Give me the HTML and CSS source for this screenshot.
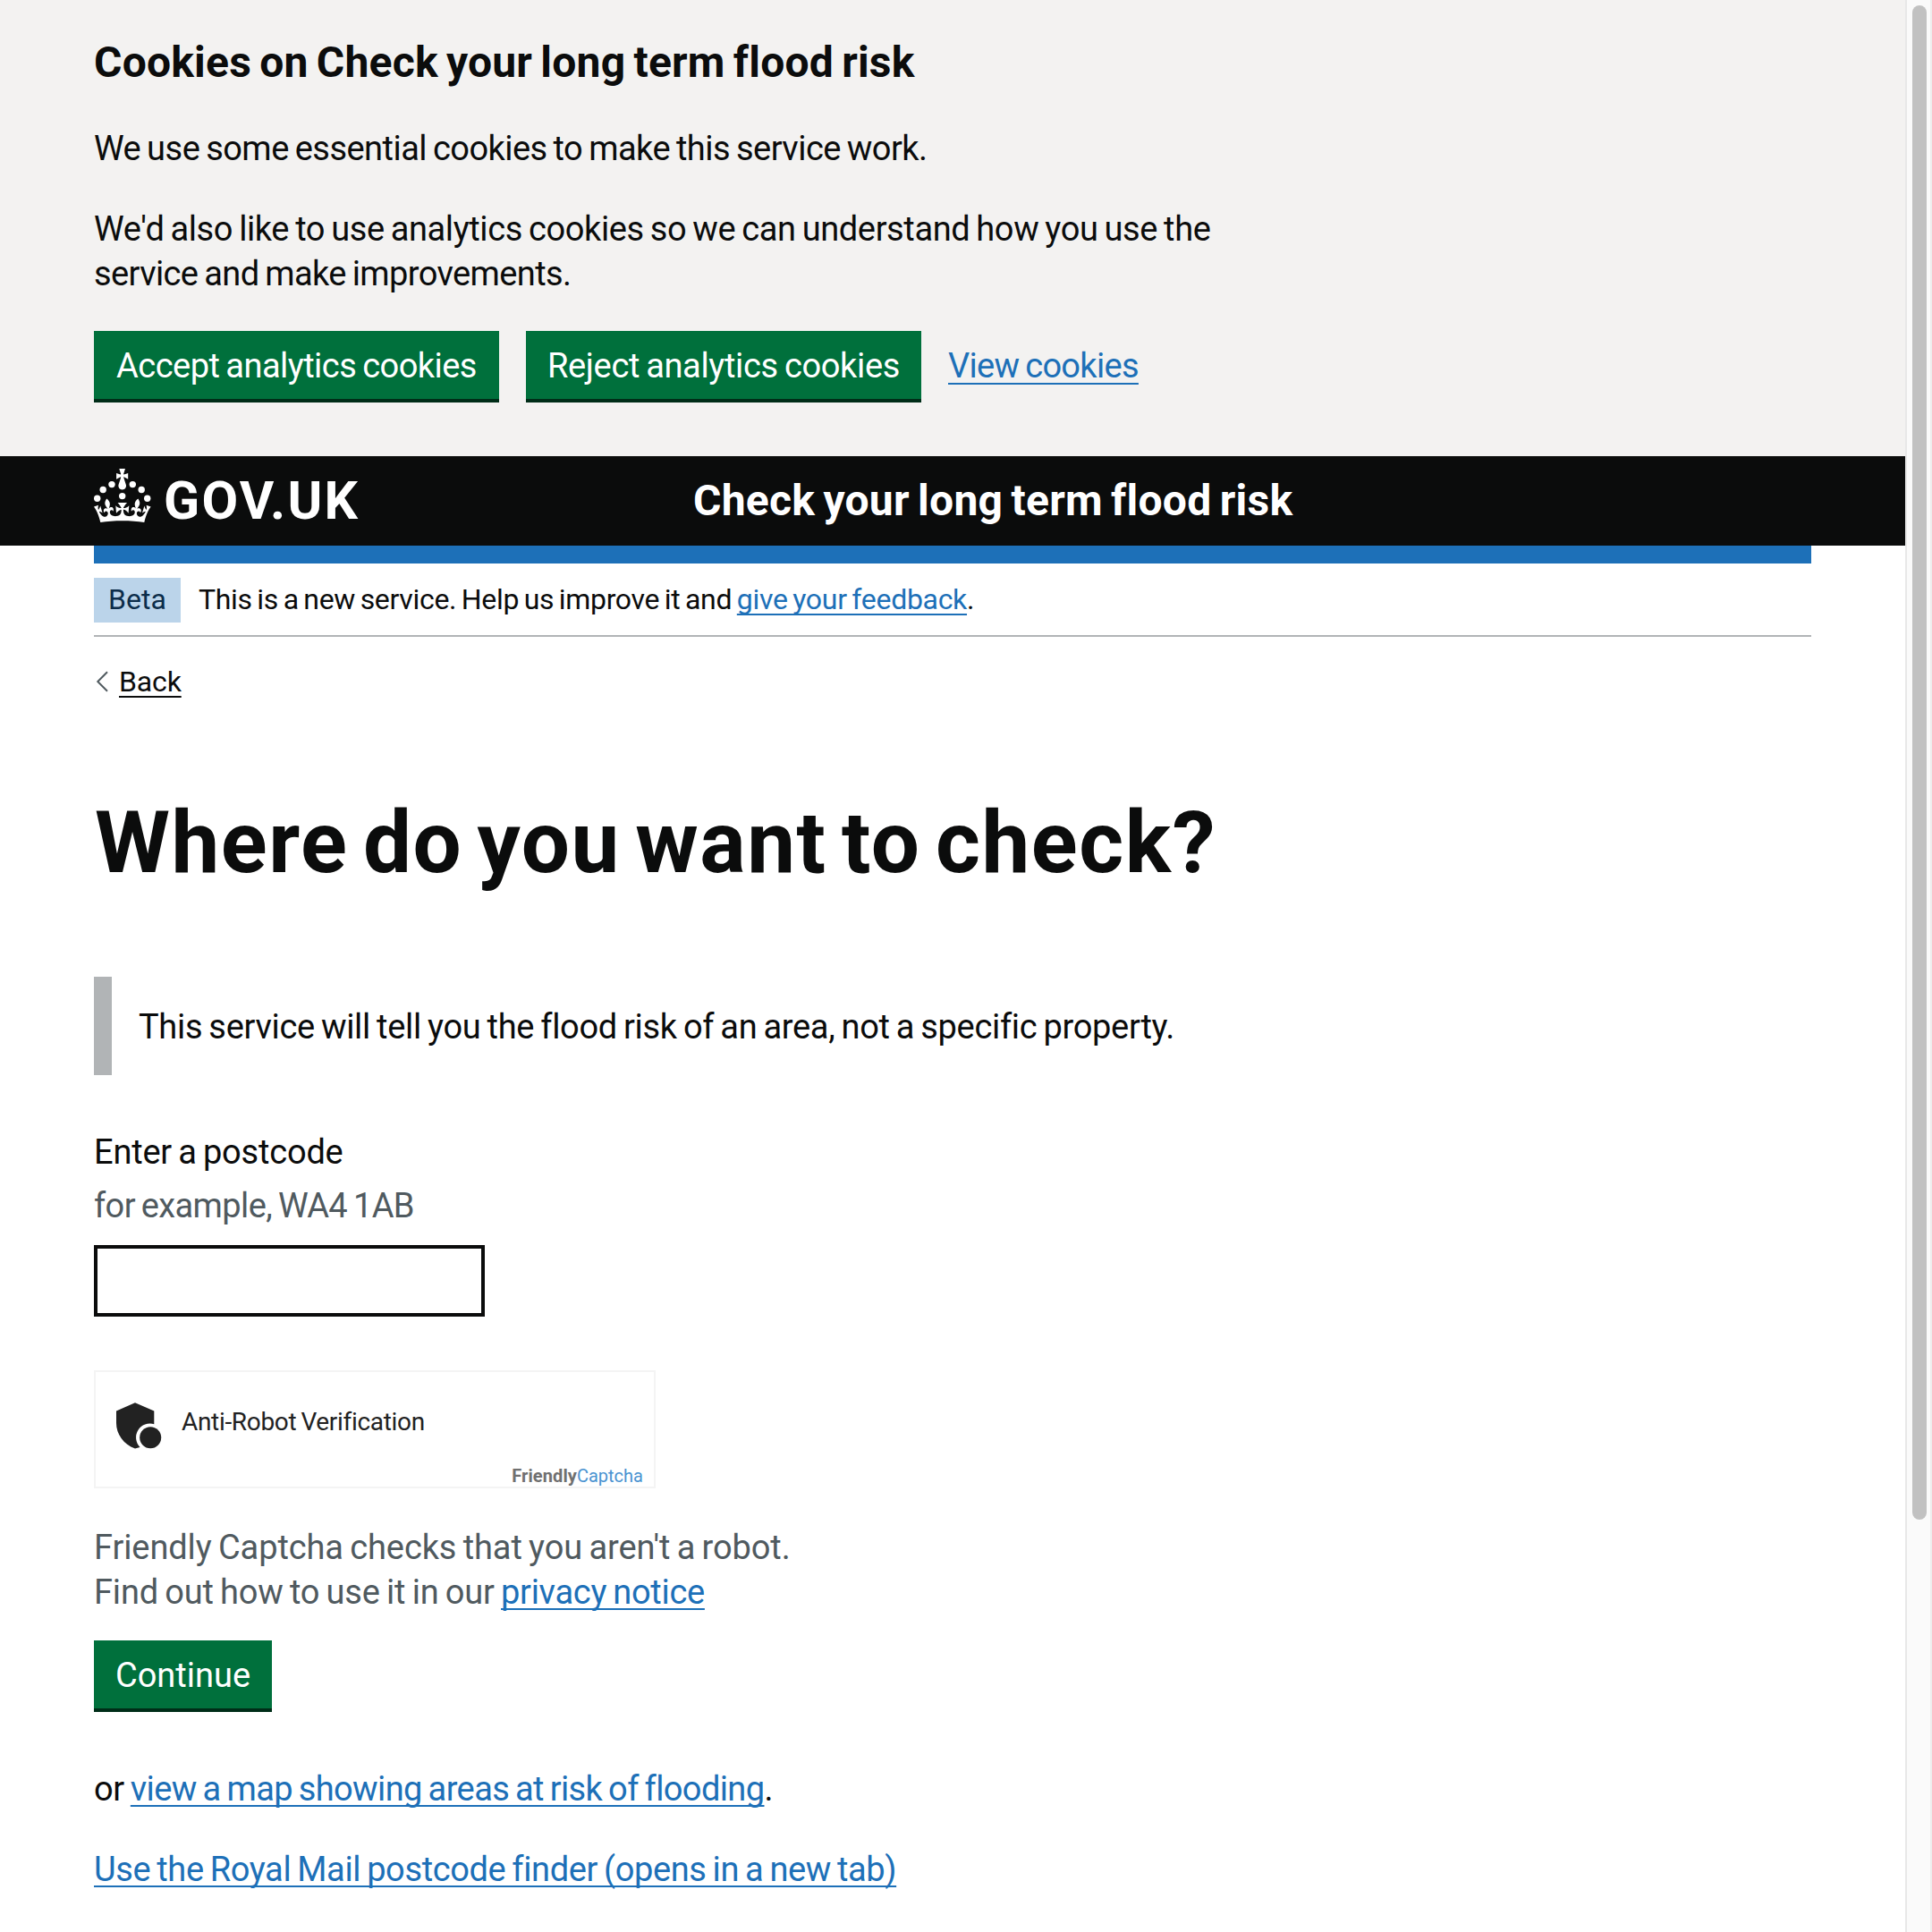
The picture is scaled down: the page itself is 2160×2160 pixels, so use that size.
FILE: index.html
```html
<!DOCTYPE html>
<html lang="en">
<head>
<meta charset="utf-8">
<title>Where do you want to check? - Check your long term flood risk - GOV.UK</title>
<link rel="stylesheet" href="styles.css">
</head>
<body>
<div class="page">
  <section class="cookie-banner">
    <h2 class="cookie-title">Cookies on Check your long term flood risk</h2>
    <p class="text"><span class="fit-53">We use some essential cookies to make this service work.</span></p>
    <p class="text"><span class="fit-40">We'd also like to use analytics cookies so we can understand how you use the</span><br><span class="fit-60">service and make improvements.</span></p>
    <div class="button-group">
      <button class="button button-accept fit-53">Accept analytics cookies</button>
      <button class="button button-reject fit-34">Reject analytics cookies</button>
      <a class="link view-cookies" href="#">View cookies</a>
    </div>
  </section>

  <header class="header">
    <a class="logo" href="#">
      <svg class="crown" viewBox="0 0 64 60" width="64" height="60" fill="currentColor" aria-hidden="true">
        <circle cx="20" cy="17.6" r="3.7"/>
        <circle cx="10.2" cy="23.5" r="3.7"/>
        <circle cx="3.7" cy="33.2" r="3.7"/>
        <circle cx="31.7" cy="30.6" r="3.7"/>
        <circle cx="43.3" cy="17.6" r="3.7"/>
        <circle cx="53.2" cy="23.5" r="3.7"/>
        <circle cx="59.7" cy="33.2" r="3.7"/>
        <path d="M33.1,9.8c.2-.1.3-.3.5-.5l4.6,2.4v-6.8l-4.6,1.5c-.1-.2-.3-.3-.5-.5l1.9-5.9h-6.7l1.9,5.9c-.2.1-.3.3-.5.5l-4.6-1.5v6.8l4.6-2.4c.1.2.3.3.5.5l-2.6,8c-.9,2.8,1.2,5.7,4.1,5.7h0c3,0,5.1-2.9,4.1-5.7l-2.6-8ZM37,37.9s-3.4,3.8-4.1,6.1c2.2,0,4.2-.5,6.4-2.8l-.7,8.5c-2-2.8-4.4-4.1-5.7-3.8.1,3.1.5,6.7,5.8,7.2,3.7.3,6.7-1.5,7-3.8.4-2.6-2-4.3-3.7-1.6-1.4-4.5,2.4-6.1,4.9-3.2-1.9-4.5-1.8-7.7,2.4-10.9,3,4,2.6,7.3-1.2,11.1,2.4-1.3,6.2,0,4,4.6-1.2-2.8-3.7-2.2-4.2.2-.3,1.7.7,3.7,3,4.2,1.9.3,4.7-.9,7-5.9-1.3,0-2.4.7-3.9,1.7l2.4-8c.6,2.3,1.4,3.7,2.2,4.5.6-1.6.5-2.8,0-5.3l5,1.8c-2.6,3.6-5.2,8.7-7.3,17.5-7.4-1.1-15.7-1.7-24.5-1.7h0c-8.8,0-17.1.6-24.5,1.7-2.1-8.9-4.7-13.9-7.3-17.5l5-1.8c-.5,2.5-.6,3.7,0,5.3.8-.8,1.6-2.3,2.2-4.5l2.4,8c-1.5-1-2.6-1.7-3.9-1.7,2.3,5,5.2,6.2,7,5.9,2.3-.4,3.3-2.4,3-4.2-.5-2.4-3-3.1-4.2-.2-2.2-4.6,1.6-6,4-4.6-3.7-3.7-4.2-7.1-1.2-11.1,4.2,3.2,4.3,6.4,2.4,10.9,2.5-2.8,6.3-1.3,4.9,3.2-1.8-2.7-4.1-1-3.7,1.6.3,2.3,3.3,4.1,7,3.8,5.4-.5,5.7-4.2,5.8-7.2-1.3-.2-3.7,1-5.7,3.8l-.7-8.5c2.2,2.3,4.2,2.7,6.4,2.8-.7-2.3-4.1-6.1-4.1-6.1h10.6Z"/>
      </svg>
      <span class="wordmark">GOV.UK</span>
    </a>
    <span class="service-name">Check your long term flood risk</span>
  </header>

  <div class="container">
    <div class="header-bar"></div>
    <div class="phase-banner">
      <strong class="tag">Beta</strong>
      <span class="phase-text">This is a new service. Help us improve it and <a class="link feedback" href="#">give your feedback</a>.</span>
    </div>
    <a class="back" href="#">
      <svg class="back-icon" viewBox="0 0 14 24" width="14" height="24" fill="none" stroke="#505a5f" stroke-width="2" aria-hidden="true"><path d="M13 1.2 2.3 12l10.7 10.8"/></svg>
      <span class="back-text">Back</span>
    </a>

    <main class="main">
      <h1 class="title">Where do you want to check?</h1>
      <div class="inset text fit-31">This service will tell you the flood risk of an area, not a specific property.</div>
      <label class="label text fit-20" for="postcode">Enter a postcode</label>
      <div class="hint text fit-60">for example, WA4 1AB</div>
      <input class="input" id="postcode" type="text">

      <div class="captcha">
        <div class="captcha-row">
          <svg class="shield" viewBox="0 0 54 52" width="54" height="52" fill="#222" aria-hidden="true">
            <path d="M22 0.3 43.3 9.5V24.2A15.6 15.6 0 0 0 27.5 50L22 51.5C9 47 1 35 1 23V9.5Z"/>
            <circle cx="39.2" cy="39.2" r="12"/>
          </svg>
          <span class="captcha-text">Anti-Robot Verification</span>
        </div>
        <div class="captcha-brand"><b class="brand-bold">Friendly</b><span class="brand-light">Captcha</span></div>
      </div>

      <p class="hint text captcha-hint"><span class="fit-10">Friendly Captcha checks that you aren't a robot.</span><br><span class="fit-17">Find out how to use it in our <a class="link privacy" href="#">privacy notice</a></span></p>
      <button class="button button-continue">Continue</button>
      <p class="text or-line"><span class="fit-40">or </span><a class="link fit-60" href="#">view a map showing areas at risk of flooding</a>.</p>
      <p class="text finder"><a class="link fit-38" href="#">Use the Royal Mail postcode finder (opens in a new tab)</a></p>
    </main>
  </div>
</div>
<div class="scrollbar"><div class="thumb"></div></div>
</body>
</html>
```
FILE: styles.css
```css
* { box-sizing: border-box; }

body {
  margin: 0;
  height: 2160px;
  overflow: hidden;
  display: flex;
  background: #fff;
  color: #0b0c0c;
  font-family: Roboto, "Noto Sans", sans-serif;
  font-size: 38px;
  line-height: 50px;
}

h1, h2, p { margin: 0; }

.page { width: 2130px; flex: none; }
.text { white-space: nowrap; word-spacing: -2px; }

/* Tracking per line of copy */
.fit-10 { letter-spacing: -0.1px; }
.fit-17 { letter-spacing: -0.17px; }
.fit-20 { letter-spacing: -0.2px; }
.fit-31 { letter-spacing: -0.31px; }
.fit-34 { letter-spacing: -0.34px; }
.fit-38 { letter-spacing: -0.38px; }
.fit-40 { letter-spacing: -0.39px; }
.fit-53 { letter-spacing: -0.53px; }
.fit-60 { letter-spacing: -0.61px; }

.link {
  color: #1d70b8;
  text-decoration: underline;
  text-decoration-thickness: 2px;
  text-underline-offset: 5px;
  text-decoration-skip-ink: none;
}

/* Cookie banner */
.cookie-banner {
  height: 510px;
  padding: 40px 105px 0;
  background: #f3f2f1;
  display: flex;
  flex-direction: column;
  gap: 40px;
}
.cookie-title {
  font-size: 48px;
  line-height: 60px;
  font-weight: 700;
  word-spacing: -3px;
  letter-spacing: 0.22px;
}
.cookie-banner .text { padding-top: 1px; margin-bottom: -1px; }
.button-group { display: flex; align-items: center; gap: 30px; }

.button {
  display: block;
  height: 76px;
  margin: 0 0 4px;
  padding: 2px 0 0;
  border: 0;
  border-radius: 0;
  background: #00703c;
  box-shadow: 0 4px 0 #002d18;
  color: #fff;
  font-family: inherit;
  font-size: 38px;
  line-height: 74px;
  word-spacing: -2px;
  text-align: center;
  white-space: nowrap;
}
.button-accept { width: 453px; }
.button-reject { width: 442px; }
.button-continue { width: 199px; margin-top: 29px; }
.view-cookies {
  margin-bottom: 2px;
  word-spacing: -2px;
  letter-spacing: -0.68px;
  text-underline-offset: 6px;
}

/* Header */
.header {
  height: 100px;
  padding-left: 105px;
  background: #0b0c0c;
  color: #fff;
  display: flex;
  align-items: flex-start;
}
.logo {
  width: 670px;
  display: flex;
  gap: 14px;
  color: #fff;
  text-decoration: none;
}
.crown { margin-top: 14px; }
.wordmark {
  margin-top: 15px;
  font-size: 59px;
  line-height: 70px;
  font-weight: 700;
  letter-spacing: 2.2px;
}
.service-name {
  margin-top: 20px;
  font-size: 48px;
  line-height: 60px;
  font-weight: 700;
  word-spacing: -3px;
  letter-spacing: 0.27px;
}

/* Page body */
.container { width: 1920px; margin-left: 105px; }
.header-bar { height: 20px; background: #1d70b8; }

.phase-banner {
  height: 82px;
  padding-top: 16px;
  border-bottom: 2px solid #b1b4b6;
  display: flex;
  gap: 20px;
  font-size: 32px;
  line-height: 40px;
}
.tag {
  width: 97px;
  height: 50px;
  padding: 4px 0 6px;
  background: #bbd4ea;
  color: #0c2d4a;
  font-weight: 400;
  text-align: center;
}
.phase-text { margin-top: 4px; word-spacing: -2px; letter-spacing: -0.32px; }
.feedback { letter-spacing: -0.3px; }

.back {
  margin-top: 30px;
  display: flex;
  width: max-content;
  gap: 12px;
  padding-left: 2px;
  color: #0b0c0c;
  font-size: 32px;
  line-height: 40px;
  text-decoration: none;
}
.back-icon { margin-top: 8px; }
.back-text {
  letter-spacing: -0.15px;
  text-decoration: underline;
  text-decoration-thickness: 2px;
  text-underline-offset: 5px;
}

.main { padding-top: 110px; }
.title {
  padding-left: 1px;
  font-size: 96px;
  line-height: 100px;
  font-weight: 700;
  word-spacing: -9px;
  letter-spacing: 1.55px;
}
.inset {
  margin-top: 100px;
  padding: 31px 30px 29px;
  border-left: 20px solid #b1b4b6;
}
.label { display: block; margin-top: 61px; }
.hint { color: #505a5f; }
.label + .hint { margin-top: 10px; }
.input {
  display: block;
  width: 437px;
  height: 80px;
  margin: 19px 0 0;
  padding: 10px;
  border: 4px solid #0b0c0c;
  border-radius: 0;
  background: #fff;
  font: inherit;
}

/* Captcha widget */
.captcha {
  width: 628px;
  height: 132px;
  margin-top: 60px;
  padding: 34px 12px 0 22px;
  border: 2px solid #f4f4f4;
  color: #222;
}
.captcha-row { display: flex; gap: 20px; height: 52px; }
.captcha-text {
  margin-top: 4px;
  font-size: 28px;
  line-height: 36px;
  word-spacing: -1.5px;
  letter-spacing: -0.32px;
}
.captcha-brand {
  display: flex;
  justify-content: flex-end;
  margin-top: 18px;
  font-size: 20px;
  line-height: 24px;
}
.brand-bold { color: #707070; letter-spacing: 0.1px; }
.brand-light { color: #4a93d1; }

.captcha-hint { margin-top: 41px; }
.privacy { letter-spacing: -0.29px; }
.or-line { margin-top: 65px; }
.finder { margin-top: 40px; }

/* Window scrollbar */
.scrollbar {
  width: 30px;
  flex: none;
  padding: 6px 4px 0 6px;
  border-left: 2px solid #e8e8e8;
  border-right: 2px solid #ededed;
  background: #fafafa;
}
.thumb { width: 16px; height: 1693px; border-radius: 8px; background: #c1c1c1; }
```
